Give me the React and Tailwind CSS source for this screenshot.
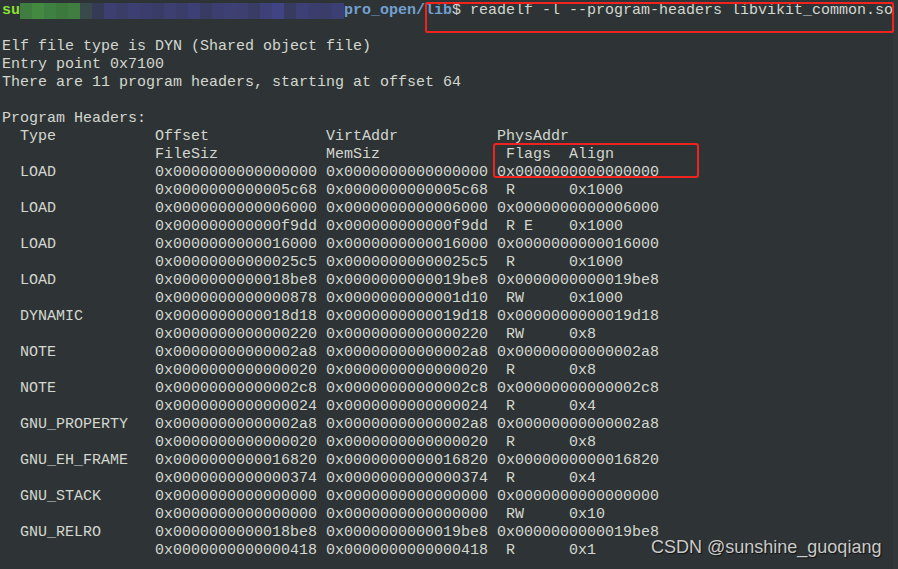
const rows = [
  ['LOAD', '0x0000000000000000', '0x0000000000000000', '0x0000000000000000', '0x0000000000005c68', '0x0000000000005c68', 'R', '0x1000'],
  ['LOAD', '0x0000000000006000', '0x0000000000006000', '0x0000000000006000', '0x000000000000f9dd', '0x000000000000f9dd', 'R E', '0x1000'],
  ['LOAD', '0x0000000000016000', '0x0000000000016000', '0x0000000000016000', '0x00000000000025c5', '0x00000000000025c5', 'R', '0x1000'],
  ['LOAD', '0x0000000000018be8', '0x0000000000019be8', '0x0000000000019be8', '0x0000000000000878', '0x0000000000001d10', 'RW', '0x1000'],
  ['DYNAMIC', '0x0000000000018d18', '0x0000000000019d18', '0x0000000000019d18', '0x0000000000000220', '0x0000000000000220', 'RW', '0x8'],
  ['NOTE', '0x00000000000002a8', '0x00000000000002a8', '0x00000000000002a8', '0x0000000000000020', '0x0000000000000020', 'R', '0x8'],
  ['NOTE', '0x00000000000002c8', '0x00000000000002c8', '0x00000000000002c8', '0x0000000000000024', '0x0000000000000024', 'R', '0x4'],
  ['GNU_PROPERTY', '0x00000000000002a8', '0x00000000000002a8', '0x00000000000002a8', '0x0000000000000020', '0x0000000000000020', 'R', '0x8'],
  ['GNU_EH_FRAME', '0x0000000000016820', '0x0000000000016820', '0x0000000000016820', '0x0000000000000374', '0x0000000000000374', 'R', '0x4'],
  ['GNU_STACK', '0x0000000000000000', '0x0000000000000000', '0x0000000000000000', '0x0000000000000000', '0x0000000000000000', 'RW', '0x10'],
  ['GNU_RELRO', '0x0000000000018be8', '0x0000000000019be8', '0x0000000000019be8', '0x0000000000000418', '0x0000000000000418', 'R', '0x1'],
];

// pixelated blur over the user@host part of the prompt
const mosaic = [
  '#3f7d40', '#43893f', '#3e8041', '#3b7a3c', '#407e3f', '#3a4a4c',
  '#363b55', '#3d3f70', '#3a3d68', '#3c3f72', '#3b3e6c', '#393c66',
  '#3c3f70', '#3a3d6a', '#3d4074', '#383b62', '#3b3e6e', '#3d4073',
  '#3c3f6f', '#393c64', '#3e4178', '#404484', '#383b60', '#3d4075',
  '#3b3e6d', '#3a3d69', '#3c3f72',
];

const pad = (s, n) => s + ' '.repeat(Math.max(0, n - s.length));

export default function App() {
  const lines = [
    'Elf file type is DYN (Shared object file)',
    'Entry point 0x7100',
    'There are 11 program headers, starting at offset 64',
    '',
    'Program Headers:',
    '  Type           Offset             VirtAddr           PhysAddr',
    '                 FileSiz            MemSiz              Flags  Align',
  ];
  rows.forEach((r) => {
    lines.push('  ' + pad(r[0], 15) + r[1] + ' ' + r[2] + ' ' + r[3]);
    lines.push(' '.repeat(17) + r[4] + ' ' + r[5] + '  ' + pad(r[6], 6) + ' ' + r[7]);
  });

  return (
    <div className="relative w-[898px] h-[569px] overflow-hidden bg-[#2e3436] flex">
      <div
        className="flex-1 pl-[2px] pt-[2px] text-[#d3d7cf] text-[15px] leading-[18px] whitespace-pre"
        style={{ fontFamily: '"Liberation Mono", "DejaVu Sans Mono", monospace' }}
      >
        <div className="flex items-center h-[18px]">
          <span className="text-[#8ae234] font-bold">su</span>
          <span className="flex h-[16px] w-[324px]">
            {mosaic.map((c, i) => (
              <span key={i} className="h-full w-[12px]" style={{ backgroundColor: c }} />
            ))}
          </span>
          <span className="text-[#729fcf] font-bold">pro_open/lib</span>
          <span>$ readelf -l --program-headers libvikit_common.so</span>
        </div>
        <div className="h-[18px]" />
        {lines.map((l, i) => (
          <div key={i} className="h-[18px]">{l}</div>
        ))}
      </div>
      <div className="w-[5px] bg-[#323739]" />

      <div className="absolute left-[425px] top-[2px] w-[469px] h-[31px] border-2 border-[#f0231e] rounded-[2px]" />
      <div className="absolute left-[493px] top-[143px] w-[206px] h-[35px] border-2 border-[#f0231e] rounded-[3px]" />
      <div
        className="absolute left-[651px] top-[536px] text-[18px] leading-[22px] text-[#cacaca] [text-shadow:1px_1px_1px_#111]"
        style={{ fontFamily: '"Liberation Sans", Arial, sans-serif' }}
      >
        CSDN @sunshine_guoqiang
      </div>
    </div>
  );
}
